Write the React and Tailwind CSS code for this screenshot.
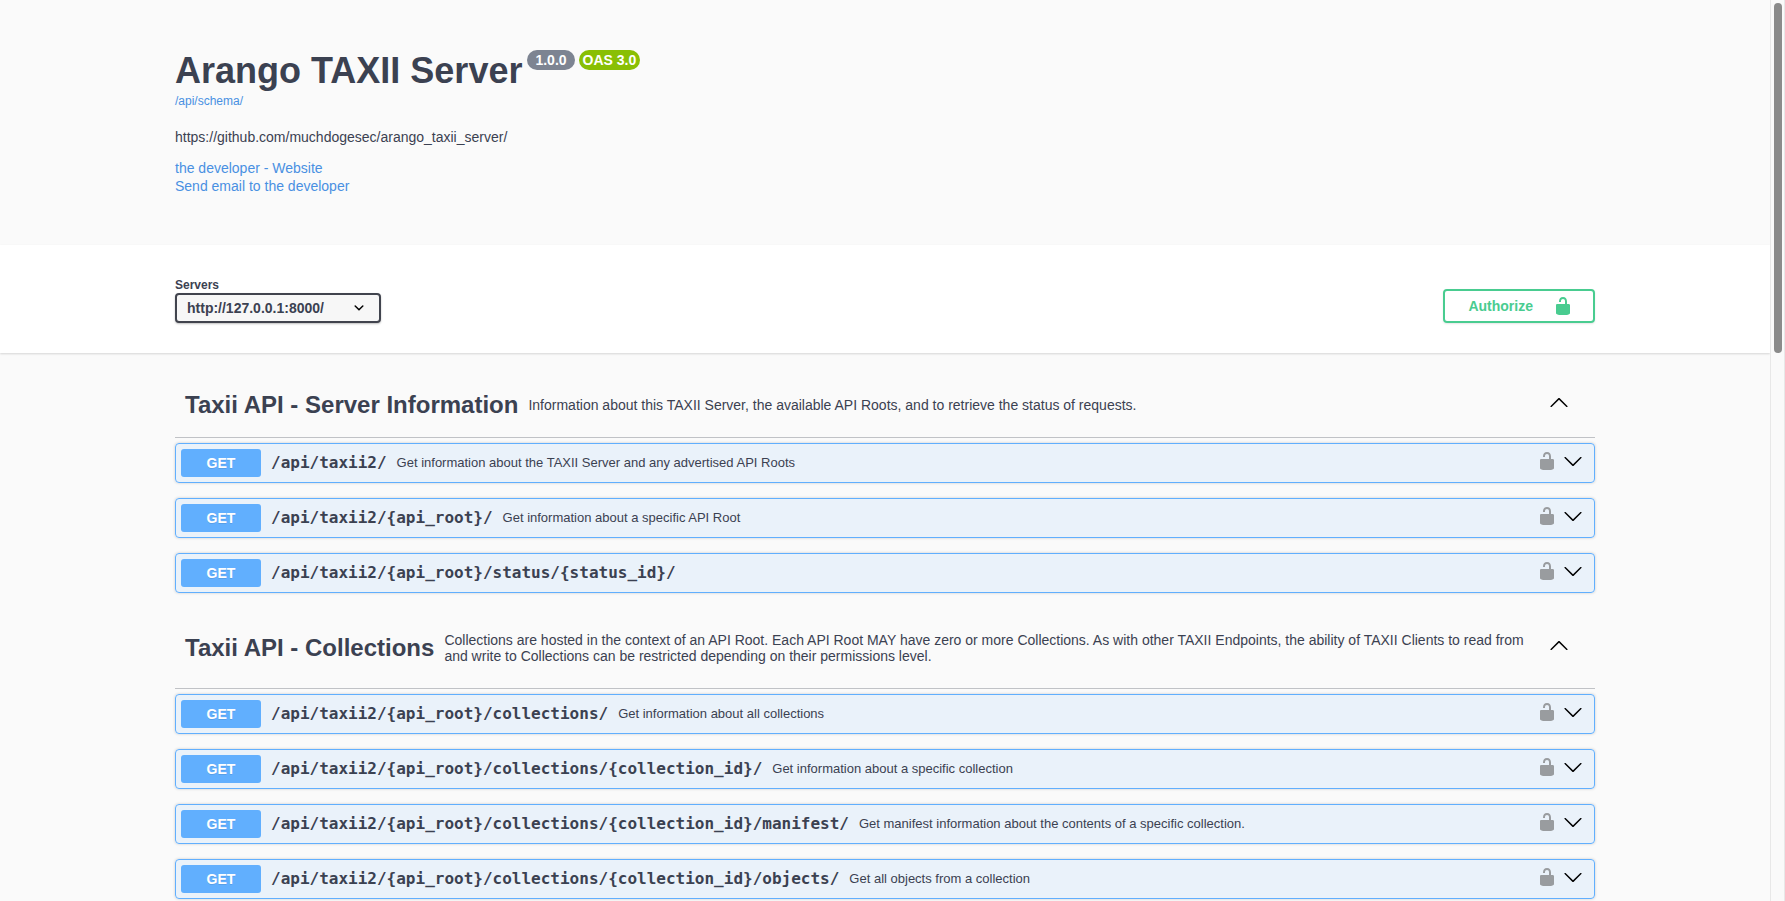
const UNLOCK_PATH =
  'M15.8 8H14V5.6C14 2.703 12.665 1 10 1 7.334 1 6 2.703 6 5.6V6h2v-.801C8 3.754 8.797 3 10 3c1.203 0 2 .754 2 2.199V8H4c-.553 0-1 .646-1 1.199V17c0 .549.428 1.139.951 1.307l1.197.387C5.672 18.861 6.55 19 7.1 19h5.8c.549 0 1.428-.139 1.951-.307l1.196-.387c.524-.167.953-.757.953-1.306V9.199C17 8.646 16.352 8 15.8 8z'
const DOWN_PATH =
  'M17.418 6.109c.272-.268.709-.268.979 0s.271.701 0 .969l-7.908 7.83c-.27.268-.707.268-.979 0l-7.908-7.83c-.27-.268-.27-.701 0-.969.271-.268.709-.268.979 0L10 13.25l7.418-7.141z'
const UP_PATH =
  'M17.418 13.908c.272.268.709.268.979 0s.271-.701 0-.969l-7.908-7.83c-.27-.268-.707-.268-.979 0l-7.908 7.83c-.27.268-.27.701 0 .969.271.268.709.268.979 0L10 6.767l7.418 7.141z'

const SECTIONS = [
  {
    title: 'Taxii API - Server Information',
    description:
      'Information about this TAXII Server, the available API Roots, and to retrieve the status of requests.',
    operations: [
      { path: '/api/taxii2/', summary: 'Get information about the TAXII Server and any advertised API Roots' },
      { path: '/api/taxii2/{api_root}/', summary: 'Get information about a specific API Root' },
      { path: '/api/taxii2/{api_root}/status/{status_id}/', summary: '' },
    ],
  },
  {
    title: 'Taxii API - Collections',
    description:
      'Collections are hosted in the context of an API Root. Each API Root MAY have zero or more Collections. As with other TAXII Endpoints, the ability of TAXII Clients to read from and write to Collections can be restricted depending on their permissions level.',
    operations: [
      { path: '/api/taxii2/{api_root}/collections/', summary: 'Get information about all collections' },
      {
        path: '/api/taxii2/{api_root}/collections/{collection_id}/',
        summary: 'Get information about a specific collection',
      },
      {
        path: '/api/taxii2/{api_root}/collections/{collection_id}/manifest/',
        summary: 'Get manifest information about the contents of a specific collection.',
      },
      {
        path: '/api/taxii2/{api_root}/collections/{collection_id}/objects/',
        summary: 'Get all objects from a collection',
      },
    ],
  },
]

function Icon({ path, className = '' }) {
  return (
    <svg viewBox="0 0 20 20" className={`block size-5 fill-current ${className}`} aria-hidden="true">
      <path d={path} />
    </svg>
  )
}

function Wrapper({ children, className = '' }) {
  return <div className={`mx-auto w-full max-w-[1460px] px-5 ${className}`}>{children}</div>
}

function Operation({ path, summary }) {
  return (
    <div className="mb-[15px] flex items-center rounded-[4px] border border-[#61affe] bg-[#61affe]/10 p-[5px] shadow-[0_0_3px_rgba(0,0,0,0.19)]">
      <span className="w-20 shrink-0 rounded-[3px] bg-[#61affe] text-center text-sm leading-7 font-bold text-white [text-shadow:0_1px_0_rgba(0,0,0,0.1)]">
        GET
      </span>
      <a
        href="#operation"
        className="shrink-0 px-[10px] font-['DejaVu_Sans_Mono',monospace] text-base leading-5 font-bold"
      >
        {path}
      </a>
      <span className="min-w-0 flex-1 text-[13px] leading-4">{summary}</span>
      <div className="flex shrink-0 gap-[6px] pr-[6px] pb-1">
        <button type="button" aria-label="Authorization button unlocked" className="text-[#999c9f]">
          <Icon path={UNLOCK_PATH} />
        </button>
        <button type="button" aria-label={`Expand ${path}`} className="text-black">
          <Icon path={DOWN_PATH} />
        </button>
      </div>
    </div>
  )
}

function Section({ title, description, operations }) {
  return (
    <section>
      <div className="mb-[5px] flex items-center border-b border-[#3b4151]/30 py-[10px] pr-5 pl-[10px]">
        <h3 className="shrink-0 text-2xl leading-7 font-bold">{title}</h3>
        <p className="my-[14px] min-w-0 flex-1 px-[10px] text-sm leading-4">{description}</p>
        <button type="button" aria-label={`Collapse ${title}`} className="shrink-0 px-[6px] pb-1 text-black">
          <Icon path={UP_PATH} />
        </button>
      </div>
      {operations.map((op) => (
        <Operation key={op.path} {...op} />
      ))}
    </section>
  )
}

export default function App() {
  return (
    <div className="flex h-screen overflow-hidden bg-[#fafafa] font-['Liberation_Sans',Arial,sans-serif] text-[#3b4151]">
      <main className="min-w-0 flex-1">
        <Wrapper className="py-[50px]">
          <div className="flex items-start gap-[5px]">
            <h1 className="text-4xl leading-[42px] font-bold">Arango TAXII Server</h1>
            <div className="flex gap-1">
              <span className="rounded-full bg-[#7d8492] px-2 text-sm leading-5 font-bold text-white">1.0.0</span>
              <span className="rounded-full bg-[#89bf04] px-1 text-sm leading-5 font-bold text-white">OAS 3.0</span>
            </div>
          </div>
          <a href="/api/schema/" className="mt-[2px] block w-fit text-xs leading-[14px] text-[#4990e2]">
            /api/schema/
          </a>
          <p className="mt-[21px] text-sm leading-4">https://github.com/muchdogesec/arango_taxii_server/</p>
          <div className="mt-[14px] flex flex-col items-start text-sm leading-[18px] text-[#4990e2]">
            <a href="#website">the developer - Website</a>
            <a href="#email">Send email to the developer</a>
          </div>
        </Wrapper>

        <div className="bg-white py-[30px] shadow-[0_1px_2px_0_rgba(0,0,0,0.15)]">
          <Wrapper className="flex items-end justify-between">
            <div>
              <label htmlFor="servers" className="block pt-[2px] text-xs leading-4 font-bold">
                Servers
              </label>
              <div className="grid w-[206px] items-center">
                <select
                  id="servers"
                  className="col-start-1 row-start-1 h-[30px] w-full appearance-none rounded-[4px] border-2 border-[#41444e] bg-[#f7f7f7] pr-10 pl-[10px] text-sm font-bold shadow-[0_1px_2px_0_rgba(0,0,0,0.25)]"
                >
                  <option>http://127.0.0.1:8000/</option>
                </select>
                <svg
                  viewBox="0 0 10 6"
                  className="pointer-events-none col-start-1 row-start-1 mr-[17px] h-[6px] w-[10px] justify-self-end"
                  aria-hidden="true"
                >
                  <path d="M1.2 1 5 4.7 8.8 1" fill="none" stroke="#000" strokeWidth="1.5" strokeLinecap="round" />
                </svg>
              </div>
            </div>
            <button
              type="button"
              className="flex h-[34px] items-center gap-5 rounded-[4px] border-2 border-[#49cc90] pr-5 pl-[23px] text-sm font-bold text-[#49cc90] shadow-[0_1px_2px_rgba(0,0,0,0.1)]"
            >
              Authorize
              <Icon path={UNLOCK_PATH} />
            </button>
          </Wrapper>
        </div>

        <Wrapper className="pt-5">
          {SECTIONS.map((section) => (
            <Section key={section.title} {...section} />
          ))}
        </Wrapper>
      </main>

      <div className="w-[15px] shrink-0 border-x border-[#e8e8e8] bg-[#fafafa] px-[3px] pt-[3px]" aria-hidden="true">
        <div className="h-[39%] w-2 rounded-full bg-[#8b8b8b]" />
      </div>
    </div>
  )
}
